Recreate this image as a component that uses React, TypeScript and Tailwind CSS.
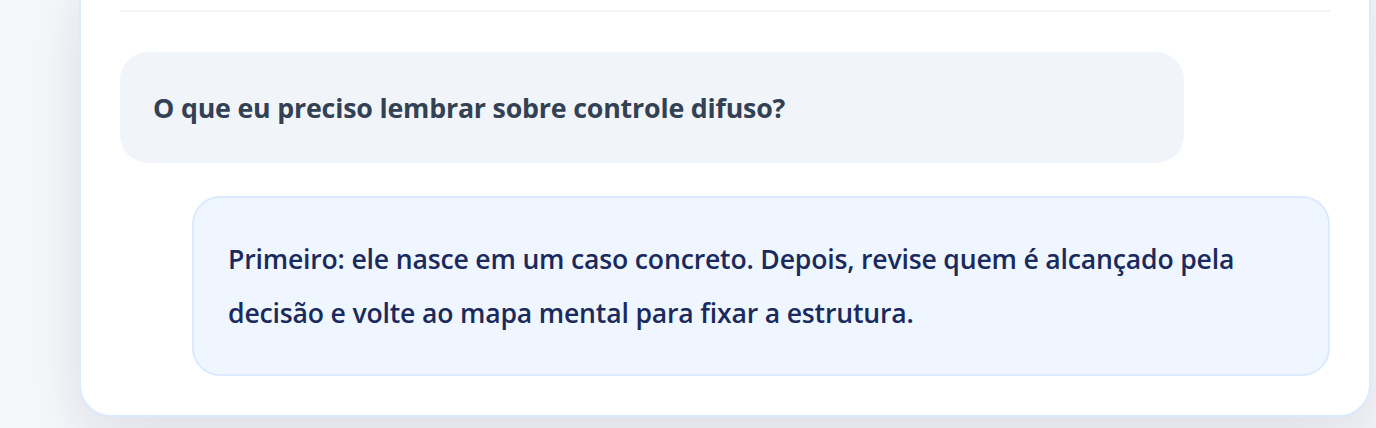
import React from "react";

export default function App() {
  return (
    <div
      className="w-[1376px] h-[428px] overflow-hidden bg-[#f5f7fb]"
      style={{ fontFamily: '"Open Sans", "Noto Sans", sans-serif' }}
    >
      <div className="ml-[79px] w-[1292px] -mt-[40px] rounded-[32px] border-2 border-[#dbeafe] bg-white px-[39px] pt-[48px] pb-[39px] shadow-[0_24px_60px_rgba(15,23,42,0.10)]">
        <div className="h-[2px] w-full bg-[#f1f5f9]" />
        <div className="mt-[40px] flex flex-col gap-[33px]">
          <div className="w-[1064px] rounded-[28px] bg-[#f1f5f9] px-[33px] py-[29px]">
            <p className="text-[26.8px] leading-[53px] font-bold text-[#334155] tracking-[-0.2px]">
              O que eu preciso lembrar sobre controle difuso?
            </p>
          </div>
          <div className="ml-[72px] rounded-[28px] border-2 border-[#dbeafe] bg-[#eff6ff] px-[34px] py-[34px]">
            <p className="text-[26.6px] leading-[54px] font-semibold text-[#1b2a5c] tracking-[-0.18px]">
              Primeiro: ele nasce em um caso concreto. Depois, revise quem é alcançado pela decisão e volte ao mapa mental para fixar a estrutura.
            </p>
          </div>
        </div>
      </div>
    </div>
  );
}
